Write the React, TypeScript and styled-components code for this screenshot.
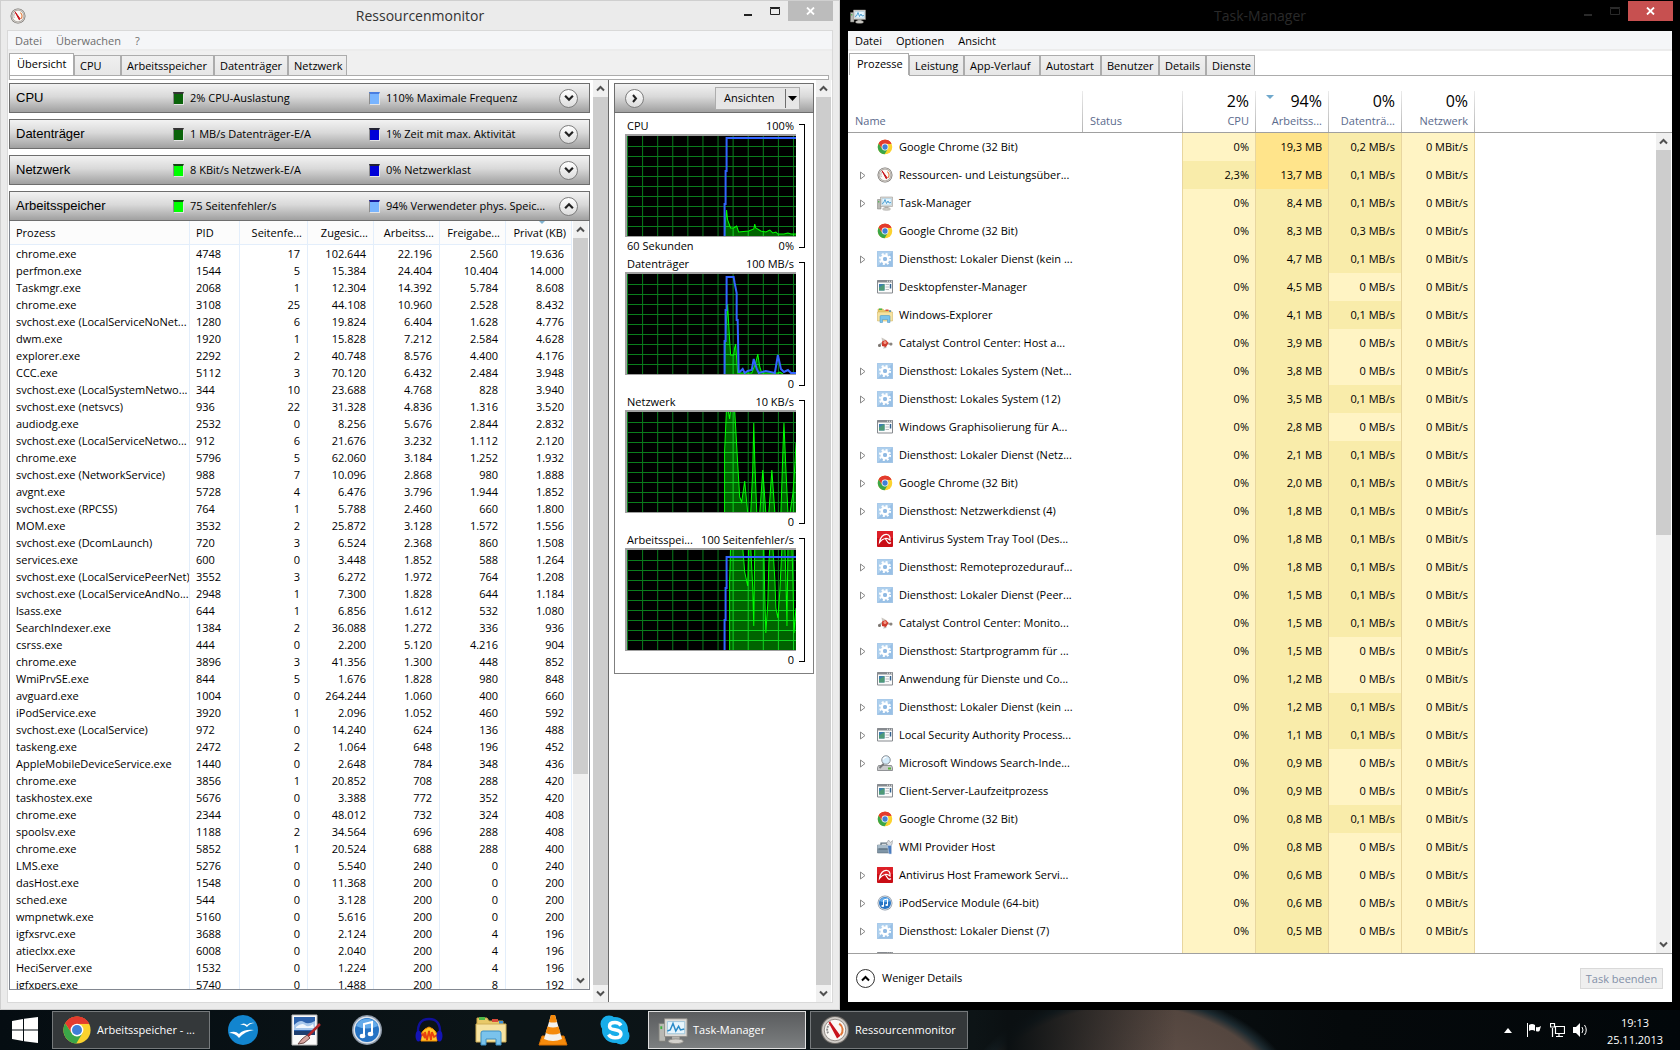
import React from "react";
import styled, { createGlobalStyle } from "styled-components";

const GlobalStyle = createGlobalStyle`
  *, *::before, *::after { box-sizing: border-box; }
  body {
    margin: 0;
    background: #000;
    color: #000;
    font-family: "Open Sans", "Noto Sans", sans-serif;
    font-size: 11px;
    line-height: 16px;
  }
  button {
    margin: 0;
    padding: 0;
    border: 0;
    background: none;
    color: inherit;
    font: inherit;
  }
  svg { display: block; }
`;

/* ---------- icons ---------- */

type IconName =
  | "chrome" | "gauge" | "monitor" | "gear" | "window" | "explorer" | "catalyst"
  | "avira" | "search" | "wmi" | "itunes" | "openoffice" | "paint" | "audacity" | "vlc" | "skype";

const drawings: Record<IconName, React.ReactNode> = {
  chrome: (
    <>
      <circle cx="16" cy="16" r="14.5" fill="#fbd22e" />
      <path d="M16 16 3.4 8.8A14.5 14.5 0 0 1 28.9 9.4L16 9.4Z" fill="#e33b2e" />
      <path d="M3.4 8.8A14.5 14.5 0 0 0 15.2 30.5L21.8 19.4 16 22.6 10.3 19.3Z" fill="#3aa648" />
      <path d="M3.4 8.8 10.3 19.3 9.4 16 16 9.4H28.9A14.5 14.5 0 0 0 3.4 8.8Z" fill="#e33b2e" />
      <circle cx="16" cy="16" r="6.8" fill="#fff" />
      <circle cx="16" cy="16" r="5.3" fill="#3f7fd6" />
    </>
  ),
  gauge: (
    <>
      <circle cx="16" cy="16" r="15" fill="#6f6c68" />
      <circle cx="16" cy="16" r="13.8" fill="#cfcbc6" />
      <circle cx="16" cy="16" r="11.5" fill="#fbf9f5" stroke="#8d8882" strokeWidth="1" />
      <path d="M8.6 19.5A8 8 0 0 1 10 10" fill="none" stroke="#8a8a8a" strokeWidth="2" strokeDasharray="2 1" />
      <path d="M20.5 9.2A8.2 8.2 0 0 1 22 21.5" fill="none" stroke="#e0783a" strokeWidth="2.2" />
      <path d="M10 7.500 20.500 22 18.500 23.600Z" fill="#c8141c" stroke="#c8141c" strokeWidth="2" />
    </>
  ),
  monitor: (
    <>
      <path d="M1 9h7v19H1z" fill="#b9b9b4" stroke="#7d7d78" />
      <path d="M2.5 12h2v3h-2z" fill="#3cb43c" />
      <path d="M7 4h24v19H7z" fill="#dedcd8" stroke="#8f8d88" />
      <path d="M10 7h18.500v13H10z" fill="#e6f5fd" stroke="#9cc4da" />
      <path d="M10 17l3-1 3-7 3 8 3-5 2 4 4-1" fill="none" stroke="#2b8bc8" strokeWidth="1.600" />
      <path d="M15 23h8v4h-8z" fill="#b5b3ae" />
      <ellipse cx="19" cy="28" rx="8" ry="2.500" fill="#d4d2cd" stroke="#93918c" />
    </>
  ),
  gear: (
    <>
      <path d="M.5.500h31v31H.5z" fill="#98c0e6" stroke="#8bb4dc" />
      <path d="M1 1h30L1 31z" fill="#aed0ee" />
      <circle cx="16" cy="16" r="10.200" fill="none" stroke="#fff" strokeWidth="4" strokeDasharray="4 4.010" />
      <circle cx="16" cy="16" r="6.500" fill="none" stroke="#fff" strokeWidth="5" />
      <circle cx="16" cy="16" r="4" fill="#8fb9e2" />
    </>
  ),
  window: (
    <>
      <path d="M1 3h30v25H1z" fill="#fbfbfb" stroke="#868a8f" strokeWidth="2" />
      <path d="M1 2h30v5H1z" fill="#868a8f" />
      <path d="M20 3.500h2v2h-2zM24 3.500h2v2h-2zM28 3.500h2v2h-2z" fill="#e8e8e8" />
      <path d="M4 10h11v13H4z" fill="#3c7fae" />
      <path d="M4 17l11-7v13H4z" fill="#4f9a76" />
      <path d="M17 11h7M17 16h7M17 21h7" stroke="#b9bcc0" strokeWidth="2" />
      <path d="M27 10v9" stroke="#33618f" strokeWidth="3" />
    </>
  ),
  explorer: (
    <>
      <path d="M2 4h10l2 3h14v6H2z" fill="#e8c969" stroke="#c7a447" />
      <path d="M4 3h6v3H4z" fill="#4fb848" />
      <path d="M17 5h6v3h-6z" fill="#d94b3a" />
      <path d="M24 7h4v3h-4z" fill="#3b8fd8" />
      <path d="M1 10h30v18H1z" fill="#f6e3a1" stroke="#cfae56" />
      <path d="M6 31V19q0-2 2-2h16q2 0 2 2v12h-5v-6H11v6z" fill="#7ac3ec" stroke="#3d8fc4" />
    </>
  ),
  catalyst: (
    <>
      <path d="M3 21 13 14 29 19" fill="none" stroke="#b8b2ac" strokeWidth="4" />
      <path d="M9 5l8 4-2 7-5-5z" fill="#cbc6c0" />
      <path d="M17 20l2 6-7 1z" fill="#b8b2ac" />
      <circle cx="5" cy="21" r="3" fill="#77726d" />
      <circle cx="28" cy="18" r="3" fill="#8a847e" />
      <path d="M10 13l8-3 5 6-5 8-8-2z" fill="#cf3a2c" />
      <circle cx="16" cy="15" r="3" fill="#f49a86" />
    </>
  ),
  avira: (
    <>
      <rect width="32" height="32" rx="2" fill="#c90d15" />
      <path d="M0 2q0-2 2-2h28q2 0 2 2v12H0z" fill="#dd1f27" />
      <path d="M5 23C6 12 13 6 20 7q7 1 6 11-5-4-10-3-6 1-11 8z" fill="none" stroke="#fff" strokeWidth="2.400" />
      <path d="M17 16l5 7q3 3 6 0" fill="none" stroke="#fff" strokeWidth="2.400" />
    </>
  ),
  search: (
    <>
      <path d="M3 21h26l2 4v6H1v-6z" fill="#c9cacc" stroke="#76787b" strokeWidth="1.500" />
      <path d="M22 25h6v4h-6z" fill="#55b33a" />
      <path d="M14 17 5 26" stroke="#76787b" strokeWidth="4" />
      <circle cx="18" cy="10" r="8.500" fill="#d4ebfa" stroke="#8b9097" strokeWidth="2" />
      <path d="M12 9q2-5 7-5" stroke="#fff" strokeWidth="2.500" fill="none" />
    </>
  ),
  wmi: (
    <>
      <path d="M8 12v-4h12v4" fill="none" stroke="#5d6f7d" strokeWidth="2.500" />
      <path d="M1 12h27v16H1z" fill="#7f95a6" stroke="#51616e" />
      <path d="M1 12h27v7H1z" fill="#a7bac8" />
      <path d="M3 19h20v2H3z" fill="#51616e" />
      <path d="M19 9l4-7 4 5 4-4-1 8-6 4z" fill="#d9dcdf" stroke="#84898e" />
      <path d="M21 13h8v17h-5z" fill="#4a7cc0" stroke="#d0dcec" />
    </>
  ),
  itunes: (
    <>
      <circle cx="16" cy="16" r="15" fill="#8d99a8" />
      <circle cx="16" cy="16" r="13.500" fill="#dfe5ec" />
      <circle cx="16" cy="16" r="12" fill="#2573c4" />
      <path d="M5 12a12 12 0 0 1 22 0q-11 5-22 0z" fill="#62aaea" />
      <path d="M13 22V10l8-2v12" fill="none" stroke="#fff" strokeWidth="2" />
      <ellipse cx="11.500" cy="22" rx="2.800" ry="2.200" fill="#fff" />
      <ellipse cx="19.500" cy="20" rx="2.800" ry="2.200" fill="#fff" />
    </>
  ),
  openoffice: (
    <>
      <circle cx="16" cy="16" r="15" fill="#1285cf" />
      <path d="M13 11q4-3 7 0 3-3 8-2-5 0-8 4-3-3-7-2z" fill="#fff" />
      <path d="M2 19q6-3 10 1 5-5 15-4-9 1-15 8-4-5-10-5z" fill="#fff" />
    </>
  ),
  paint: (
    <>
      <path d="M3 1h25v30H3z" fill="#fafafa" stroke="#b9b9b9" />
      <path d="M5 3h21v15H5z" fill="#2e63ad" />
      <path d="M5 11q6-6 10-3t11-1v9H5z" fill="#a9c8ec" />
      <path d="M7 13q6-5 9-2t8-1l1 4H7z" fill="#f2f7fc" />
      <path d="M5 17h21v4H5z" fill="#1f3f70" />
      <path d="M31 10 17 24" stroke="#b3262a" strokeWidth="2.500" />
      <path d="M18 21l3 3-6 5-6 1 4-5z" fill="#d7a5a0" stroke="#6d4845" />
    </>
  ),
  audacity: (
    <>
      <path d="M5 20Q4 5 16 5t11 15" fill="none" stroke="#10109a" strokeWidth="2.400" />
      <path d="M8 20l2-3 2-2 2-1 2-1 2 1 2 1 2 2 2 3v7H8z" fill="#ffc629" stroke="#f08a00" />
      <path d="M8 22l2-2 2 4-0-6 2 8 2-9 2 9 1-8 2 5 3-2" fill="none" stroke="#e8420e" strokeWidth="1.800" />
      <ellipse cx="5.500" cy="22" rx="3" ry="5.500" fill="#1414b4" />
      <ellipse cx="26.500" cy="22" rx="3" ry="5.500" fill="#1414b4" />
    </>
  ),
  vlc: (
    <>
      <path d="M5 22h22l3 9H2z" fill="#f58a0b" stroke="#d86f00" />
      <path d="M14 1h4l7 24q-9 4-18 0z" fill="#f4f1ec" />
      <path d="M14 1h4l2 7q-4 1-8 0z" fill="#f58a0b" />
      <path d="M10.500 12.500q5.500 2 11 0l2 6.500q-7.500 3-15 0z" fill="#f58a0b" />
    </>
  ),
  skype: (
    <>
      <circle cx="10" cy="10" r="8.500" fill="#18ade9" />
      <circle cx="22" cy="22" r="8.500" fill="#18ade9" />
      <circle cx="16" cy="16" r="13" fill="#18ade9" />
      <path
        d="M22 11.500Q20 8.500 16 8.500q-5.500 0-5.500 3.700 0 2.800 5.500 3.600 6 .8 6 4.200 0 3.800-6 3.800-4.500 0-6.500-3.300"
        fill="none"
        stroke="#fff"
        strokeWidth="3.400"
      />
    </>
  ),
};

const Icon = ({ name, size = 16 }: { name: IconName; size?: number }) => (
  <svg width={size} height={size} viewBox="0 0 32 32" aria-hidden="true">
    {drawings[name]}
  </svg>
);

const Chevron = ({ up = false, size = 9 }: { up?: boolean; size?: number }) => (
  <svg width={size} height={size} viewBox="0 0 9 9" aria-hidden="true">
    <path d={up ? "M1 6.500 4.500 3 8 6.500" : "M1 2.500 4.500 6 8 2.500"} fill="none" stroke="currentColor" strokeWidth="2" />
  </svg>
);

/* ---------- desktop and window chrome ---------- */

const Desktop = styled.div`
  height: 100vh;
  display: grid;
  grid-template-rows: minmax(0, 1fr) 40px;
`;

const Windows = styled.main`
  display: grid;
  grid-template-columns: 1fr 1fr;
  min-height: 0;
`;

const WindowFrame = styled.section<{ $dark?: boolean }>`
  display: flex;
  flex-direction: column;
  min-width: 0;
  min-height: 0;
  padding: 0 7px 7px;
  background: ${(p) => (p.$dark ? "#000" : "#ebebeb")};
  border: 1px solid ${(p) => (p.$dark ? "#000" : "#cfcfcf")};
`;

const TitleBar = styled.header`
  flex: none;
  display: grid;
  grid-template-columns: 120px 1fr 120px;
  align-items: center;
  height: 30px;
`;

const TitleIcon = styled.span`
  padding-left: 2px;
`;

const Title = styled.h1<{ $dark?: boolean }>`
  margin: 0;
  text-align: center;
  font-size: 14px;
  font-weight: 400;
  line-height: 28px;
  color: ${(p) => (p.$dark ? "#2a2a2a" : "#333")};
`;

const WindowButtons = styled.div<{ $dark?: boolean }>`
  align-self: start;
  justify-self: end;
  display: flex;
  height: 20px;
  margin-right: -1px;
  color: ${(p) => (p.$dark ? "#2a2a2a" : "#222")};
`;

const WindowButton = styled.button<{ $close?: string }>`
  display: grid;
  place-items: center;
  width: ${(p) => (p.$close ? "45px" : "27px")};
  height: 20px;
  background: ${(p) => p.$close ?? "transparent"};
`;

const Client = styled.div<{ $dark?: boolean }>`
  flex: 1;
  display: flex;
  flex-direction: column;
  min-height: 0;
  background: ${(p) => (p.$dark ? "#fff" : "#f0f0f0")};
  outline: ${(p) => (p.$dark ? "0" : "1px solid #d9d9d9")};
`;

const MenuBar = styled.nav<{ $muted?: boolean }>`
  flex: none;
  display: flex;
  height: 20px;
  background: #f5f6f8;
  border-bottom: 2px solid #ececec;
  color: ${(p) => (p.$muted ? "#6d6d6d" : "#000")};
`;

const MenuItem = styled.button`
  padding: 1px 7px 0;
  line-height: 18px;
`;

const TabStrip = styled.div`
  flex: none;
  display: flex;
  align-items: flex-end;
  height: 24px;
  padding-left: 1px;
`;

const Tab = styled.button<{ $w: number; $active?: boolean }>`
  width: ${(p) => p.$w}px;
  height: ${(p) => (p.$active ? "22px" : "20px")};
  padding: 0 ${(p) => (p.$active ? "7px 2px" : "5px 0")};
  text-align: left;
  white-space: nowrap;
  background: ${(p) => (p.$active ? "#fff" : "linear-gradient(#f0f0f0, #e6e6e6)")};
  border: 1px solid #acacac;
  border-bottom: 0;
`;

const WindowControls = ({ closeColor }: { closeColor: string }) => (
  <>
    <WindowButton aria-label="Minimieren">
      <svg width="10" height="12" aria-hidden="true"><path d="M1 9h8v2H1z" fill="currentColor" /></svg>
    </WindowButton>
    <WindowButton aria-label="Maximieren">
      <svg width="10" height="8" aria-hidden="true">
        <path d="M.5 1.500h9v6H.5zM0 .500h10" fill="none" stroke="currentColor" />
      </svg>
    </WindowButton>
    <WindowButton aria-label="Schließen" $close={closeColor}>
      <svg width="9" height="8" aria-hidden="true"><path d="M1 .500l7 7M8 .500l-7 7" stroke="#fff" strokeWidth="1.800" /></svg>
    </WindowButton>
  </>
);

/* ---------- scroll bar ---------- */

const Bar = styled.div`
  flex: none;
  display: flex;
  flex-direction: column;
  width: 15px;
  color: #505050;
  background: #f0f0f0;
`;

const BarButton = styled.button`
  flex: none;
  display: grid;
  place-items: center;
  height: 17px;
`;

const BarTrack = styled.div`
  flex: 1;
  min-height: 0;
`;

const BarThumb = styled.div`
  background: #cdcdcd;
`;

const ScrollBar = ({ share = 100 }: { share?: number }) => (
  <Bar>
    <BarButton aria-label="Nach oben"><Chevron up /></BarButton>
    <BarTrack><BarThumb style={{ height: `${share}%` }} /></BarTrack>
    <BarButton aria-label="Nach unten"><Chevron /></BarButton>
  </Bar>
);

/* ---------- resource monitor ---------- */

const TabPageEdge = styled.div`
  flex: none;
  height: 5px;
  margin: 0 3px 0 1px;
  background: #fff;
  border: 1px solid #acacac;
`;

const MonitorBody = styled.div`
  flex: 1;
  display: flex;
  min-height: 0;
  padding-right: 1px;
  background: #fff;
`;

const Overview = styled.div`
  flex: 1;
  display: flex;
  min-width: 0;
  border-right: 1px solid #696969;
`;

const Sections = styled.div`
  flex: 1;
  display: flex;
  flex-direction: column;
  gap: 6px;
  min-width: 0;
  padding: 3px 3px 12px 1px;
`;

const headFill = "linear-gradient(#f2f2f2, #d9d9d9 45%, #a0a0a0)";

const SectionHead = styled.div`
  flex: none;
  display: grid;
  grid-template-columns: 157px 196px minmax(0, 1fr) 20px;
  align-items: center;
  height: 30px;
  padding: 0 10px 0 6px;
  background: ${headFill};
  border: 1px solid #6e6e6e;
`;

const SectionName = styled.h2`
  margin: 0;
  font-family: "Liberation Sans", Arial, sans-serif;
  font-size: 13px;
  font-weight: 400;
  line-height: 28px;
`;

const Legend = styled.span`
  display: flex;
  align-items: center;
  gap: 6px;
  white-space: nowrap;
`;

const Swatch = styled.i<{ $color: string; $top: string }>`
  width: 11px;
  height: 13px;
  background: ${(p) => p.$color};
  border: 1px solid #e4e4e4;
  border-top: 2px solid ${(p) => p.$top};
  border-left-color: #8c8c8c;
`;

const RoundButton = styled.button`
  display: grid;
  place-items: center;
  width: 19px;
  height: 19px;
  border: 1px solid #7d7d7d;
  border-radius: 50%;
  color: #222;
  background: linear-gradient(#fff, #dcdcdc);
`;

interface SectionInfo {
  name: string;
  open?: boolean;
  a: [string, string, string];
  b: [string, string, string];
}

const sections: SectionInfo[] = [
  { name: "CPU", a: ["#0b640b", "#333", "2% CPU-Auslastung"], b: ["#78b4ff", "#4a7ee0", "110% Maximale Frequenz"] },
  { name: "Datenträger", a: ["#0b640b", "#333", "1 MB/s Datenträger-E/A"], b: ["#0000d8", "#223", "1% Zeit mit max. Aktivität"] },
  { name: "Netzwerk", a: ["#00ff00", "#144814", "8 KBit/s Netzwerk-E/A"], b: ["#0000d8", "#223", "0% Netzwerklast"] },
  { name: "Arbeitsspeicher", open: true, a: ["#00ff00", "#144814", "75 Seitenfehler/s"], b: ["#78b4ff", "#1a1a9c", "94% Verwendeter phys. Speic..."] },
];

const OpenSection = styled.div`
  flex: 1;
  display: flex;
  flex-direction: column;
  min-height: 0;
`;

const TableArea = styled.div`
  flex: 1;
  display: flex;
  gap: 1px;
  min-height: 0;
  padding-right: 1px;
  border: 1px solid #828790;
  border-top: 0;
`;

const TableClip = styled.div`
  flex: 1;
  min-width: 0;
  overflow: hidden;
`;

const MemoryTable = styled.table`
  width: 100%;
  table-layout: fixed;
  border-collapse: separate;
  border-spacing: 0;

  th, td {
    padding: 0 7px 0 6px;
    border-right: 1px solid #e3eefb;
    font-weight: 400;
    text-align: right;
    white-space: nowrap;
    overflow: hidden;
  }
  th { height: 24px; padding-right: 5px; border-bottom: 1px solid #e3eefb; background: #fcfcfc; }
  td { height: 17px; }
  td:first-child { padding-right: 0; }
  th:nth-child(-n + 2), td:nth-child(-n + 2) { text-align: left; }
`;

const SortMark = styled.span`
  position: absolute;
  top: 0;
  left: 50%;
  border: 3px solid transparent;
  border-top-color: #7fb2cf;
  border-bottom: 0;
`;

const SortedHead = styled.span`
  position: relative;
  display: block;
  line-height: 23px;
`;

const memoryText = `chrome.exe|4748|17|102.644|22.196|2.560|19.636
perfmon.exe|1544|5|15.384|24.404|10.404|14.000
Taskmgr.exe|2068|1|12.304|14.392|5.784|8.608
chrome.exe|3108|25|44.108|10.960|2.528|8.432
svchost.exe (LocalServiceNoNet...|1280|6|19.824|6.404|1.628|4.776
dwm.exe|1920|1|15.828|7.212|2.584|4.628
explorer.exe|2292|2|40.748|8.576|4.400|4.176
CCC.exe|5112|3|70.120|6.432|2.484|3.948
svchost.exe (LocalSystemNetwo...|344|10|23.688|4.768|828|3.940
svchost.exe (netsvcs)|936|22|31.328|4.836|1.316|3.520
audiodg.exe|2532|0|8.256|5.676|2.844|2.832
svchost.exe (LocalServiceNetwo...|912|6|21.676|3.232|1.112|2.120
chrome.exe|5796|5|62.060|3.184|1.252|1.932
svchost.exe (NetworkService)|988|7|10.096|2.868|980|1.888
avgnt.exe|5728|4|6.476|3.796|1.944|1.852
svchost.exe (RPCSS)|764|1|5.788|2.460|660|1.800
MOM.exe|3532|2|25.872|3.128|1.572|1.556
svchost.exe (DcomLaunch)|720|3|6.524|2.368|860|1.508
services.exe|600|0|3.448|1.852|588|1.264
svchost.exe (LocalServicePeerNet)|3552|3|6.272|1.972|764|1.208
svchost.exe (LocalServiceAndNo...|2948|1|7.300|1.828|644|1.184
lsass.exe|644|1|6.856|1.612|532|1.080
SearchIndexer.exe|1384|2|36.088|1.272|336|936
csrss.exe|444|0|2.200|5.120|4.216|904
chrome.exe|3896|3|41.356|1.300|448|852
WmiPrvSE.exe|844|5|1.676|1.828|980|848
avguard.exe|1004|0|264.244|1.060|400|660
iPodService.exe|3920|1|2.096|1.052|460|592
svchost.exe (LocalService)|972|0|14.240|624|136|488
taskeng.exe|2472|2|1.064|648|196|452
AppleMobileDeviceService.exe|1440|0|2.648|784|348|436
chrome.exe|3856|1|20.852|708|288|420
taskhostex.exe|5676|0|3.388|772|352|420
chrome.exe|2344|0|48.012|732|324|408
spoolsv.exe|1188|2|34.564|696|288|408
chrome.exe|5852|1|20.524|688|288|400
LMS.exe|5276|0|5.540|240|0|240
dasHost.exe|1548|0|11.368|200|0|200
sched.exe|544|0|3.128|200|0|200
wmpnetwk.exe|5160|0|5.616|200|0|200
igfxsrvc.exe|3688|0|2.124|200|4|196
atieclxx.exe|6008|0|2.040|200|4|196
HeciServer.exe|1532|0|1.224|200|4|196
igfxpers.exe|5740|0|1.488|200|8|192`;
const memoryRows = memoryText.split("\n").map((line) => line.split("|"));

const SectionHeader = ({ info }: { info: SectionInfo }) => (
  <SectionHead>
    <SectionName>{info.name}</SectionName>
    <Legend><Swatch $color={info.a[0]} $top={info.a[1]} />{info.a[2]}</Legend>
    <Legend><Swatch $color={info.b[0]} $top={info.b[1]} />{info.b[2]}</Legend>
    <RoundButton aria-label={info.name + " umschalten"}><Chevron up={info.open} size={10} /></RoundButton>
  </SectionHead>
);

const MemoryList = () => (
  <TableArea>
    <TableClip>
      <MemoryTable>
        <colgroup>
          <col /><col width="50" /><col width="68" /><col width="66" /><col width="66" /><col width="66" /><col width="66" />
        </colgroup>
        <thead>
          <tr>
            <th>Prozess</th><th>PID</th><th>Seitenfe...</th><th>Zugesic...</th><th>Arbeitss...</th><th>Freigabe...</th>
            <th><SortedHead><SortMark />Privat (KB)</SortedHead></th>
          </tr>
        </thead>
        <tbody>
          {memoryRows.map((row) => (
            <tr key={row[1]}>{row.map((cell, i) => <td key={i}>{cell}</td>)}</tr>
          ))}
        </tbody>
      </MemoryTable>
    </TableClip>
    <ScrollBar share={73} />
  </TableArea>
);

/* graphs */

const GraphPane = styled.aside`
  flex: none;
  display: flex;
  width: 222px;
`;

const GraphColumn = styled.div`
  flex: 1;
  padding: 3px 2px 0 5px;
`;

const GraphPanel = styled.div`
  border: 1px solid #7f7f7f;
  border-top: 0;
  padding-bottom: 4px;
`;

const GraphHead = styled.div`
  display: flex;
  align-items: center;
  justify-content: space-between;
  height: 30px;
  margin: 0 -1px 4px;
  padding: 0 13px 0 10px;
  background: ${headFill};
  border: 1px solid #6e6e6e;
`;

const ViewsButton = styled.button`
  display: flex;
  align-items: center;
  width: 85px;
  height: 23px;
  padding-left: 8px;
  background: #e6e6e6;
  border: 1px solid #adadad;
`;

const ViewsArrow = styled.span`
  display: grid;
  place-items: center;
  height: 19px;
  margin-left: auto;
  padding: 0 2px;
  border-left: 1px solid #6e6e6e;
`;

const GraphBlock = styled.figure`
  display: grid;
  grid-template-columns: 1fr 6px;
  column-gap: 3px;
  height: 138px;
  margin: 0;
  padding: 0 8px 0 10px;
`;

const GraphLine = styled.figcaption<{ $end?: boolean }>`
  display: flex;
  justify-content: ${(p) => (p.$end ? "flex-end" : "space-between")};
  padding: 0 2px;
  line-height: 17px;
`;

const GraphFrame = styled.div`
  height: 103px;
  border: 1px solid #a0a0a0;
  border-width: 2px 0 1px 2px;
  background: #000;
`;

const Bracket = styled.div`
  height: 124px;
  margin-top: 7px;
  border: 1px solid #000;
  border-left: 0;
`;

interface GraphInfo {
  name: string;
  max: string;
  footLeft?: string;
  min: string;
  green: string;
  blue?: string;
}

const graphs: GraphInfo[] = [
  {
    name: "CPU", max: "100%", footLeft: "60 Sekunden", min: "0%",
    green: "97,100 98,84 99,74 100,84 103,92 106,92 109,90 111,96 121,95 126,93 127,88 128,92 133,95 138,96 142,94 145,97 148,96 150,98 156,98 160,97 163,98 168,98",
    blue: "97,100 97,68 98,68 98,35 99,35 99,2 168,2",
  },
  {
    name: "Datenträger", max: "100 MB/s", min: "0",
    green: "97,100 98,60 100,30 102,66 103,81 106,81 107,74 108,70 110,99 124,99 128,89 130,80 132,93 134,99 150,99 152,98 155,100",
    blue: "97,100 97,67 98,67 98,36 99,36 99,3 106,3 107,9 109,19 109,46 110,46 111,98 112,98 115,95 117,99 120,97 124,96 126,85 129,95 131,99 138,97 147,99 150,81 153,95 156,98 160,96 163,99 168,99",
  },
  {
    name: "Netzwerk", max: "10 KB/s", min: "0",
    green: "97,100 97,39 99,-5 100,-5 102,7 103,-2 107,-2 108,15 110,51 112,85 114,90 117,69 120,101 123,101 125,58 126,11 127,48 129,101 132,101 135,58 138,101 141,101 144,58 147,101 153,101 155,38 156,11 158,58 160,101 162,101 165,81 167,51 168,31",
  },
  {
    name: "Arbeitsspei...", max: "100 Seitenfehler/s", min: "0",
    green: "102,100 102,33 103,-5 115,-3 117,22 120,36 121,-3 123,-3 125,38 126,76 127,-3 136,-3 137,47 138,83 140,53 141,13 142,-3 145,-3 147,30 148,58 150,68 152,40 154,-3 157,-3 158,30 159,76 160,-3 164,-3 165,33 166,83 168,58",
    blue: "97,100 97,70 98,70 98,38 99,38 99,7 168,7",
  },
];

const gridPath =
  Array.from({ length: 12 }, (_, i) => `M${i * 15 + 0.5} 0V100`).join("") +
  Array.from({ length: 9 }, (_, i) => `M0 ${i * 10 + 10.5}H168`).join("");

const Graph = ({ info, id }: { info: GraphInfo; id: string }) => {
  const area = `${info.green} 168,101 97,101`;
  return (
    <GraphBlock>
      <div>
        <GraphLine><span>{info.name}</span><span>{info.max}</span></GraphLine>
        <GraphFrame>
          <svg width="100%" height="100" viewBox="0 0 168 100" preserveAspectRatio="none" aria-hidden="true">
            <clipPath id={id}><polygon points={area} /></clipPath>
            <path d={gridPath} stroke="#0a7d1c" fill="none" />
            <g clipPath={`url(#${id})`}>
              <path d="M0 0h168v100H0z" fill="#006400" />
              <path d={gridPath} stroke="#0fd420" fill="none" />
            </g>
            <polyline points={info.green} fill="none" stroke="#00ff00" />
            {info.blue && <polyline points={info.blue} fill="none" stroke="#3264ff" strokeWidth="2" />}
          </svg>
        </GraphFrame>
        <GraphLine as="div" $end={!info.footLeft}>
          {info.footLeft && <span>{info.footLeft}</span>}
          <span>{info.min}</span>
        </GraphLine>
      </div>
      <Bracket />
    </GraphBlock>
  );
};

const ResourceMonitor = () => (
  <WindowFrame>
    <TitleBar>
      <TitleIcon><Icon name="gauge" /></TitleIcon>
      <Title>Ressourcenmonitor</Title>
      <WindowButtons><WindowControls closeColor="#bcbcbc" /></WindowButtons>
    </TitleBar>
    <Client>
      <MenuBar $muted>
        <MenuItem>Datei</MenuItem><MenuItem>Überwachen</MenuItem><MenuItem>?</MenuItem>
      </MenuBar>
      <TabStrip>
        <Tab $w={65} $active>Übersicht</Tab>
        <Tab $w={47}>CPU</Tab>
        <Tab $w={93}>Arbeitsspeicher</Tab>
        <Tab $w={74}>Datenträger</Tab>
        <Tab $w={59}>Netzwerk</Tab>
      </TabStrip>
      <TabPageEdge />
      <MonitorBody>
        <Overview>
          <Sections>
            {sections.map((s) =>
              s.open ? (
                <OpenSection key={s.name}><SectionHeader info={s} /><MemoryList /></OpenSection>
              ) : (
                <SectionHeader key={s.name} info={s} />
              ),
            )}
          </Sections>
          <ScrollBar />
        </Overview>
        <GraphPane>
          <GraphColumn>
            <GraphPanel>
              <GraphHead>
                <RoundButton aria-label="Diagramme ausblenden">
                  <svg width="9" height="9" aria-hidden="true"><path d="M3 1l3 3.500L3 8" fill="none" stroke="#222" strokeWidth="2" /></svg>
                </RoundButton>
                <ViewsButton>
                  Ansichten
                  <ViewsArrow><svg width="9" height="5" aria-hidden="true"><path d="M0 0h9L4.500 5z" /></svg></ViewsArrow>
                </ViewsButton>
              </GraphHead>
              {graphs.map((g, i) => <Graph key={g.name} info={g} id={`area${i}`} />)}
            </GraphPanel>
          </GraphColumn>
          <ScrollBar />
        </GraphPane>
      </MonitorBody>
    </Client>
  </WindowFrame>
);

/* ---------- task manager ---------- */

const TabLine = styled.div`
  flex: none;
  height: 1px;
  margin-left: 61px;
  background: #acacac;
`;

const ProcessHeadArea = styled.div`
  flex: none;
  padding-top: 15px;
  border-bottom: 1px solid #a0a0a0;
`;

const ProcessArea = styled.div`
  flex: 1;
  display: flex;
  min-height: 0;
  padding-right: 1px;
`;

const ProcessClip = styled.div`
  flex: 1;
  min-width: 0;
  overflow: hidden;
`;

const ProcessTable = styled.table`
  width: 627px;
  table-layout: fixed;
  border-collapse: separate;
  border-spacing: 0;
`;

const HeadCell = styled.th<{ $left?: boolean }>`
  height: 41px;
  padding: 0 7px 2px;
  vertical-align: bottom;
  text-align: ${(p) => (p.$left ? "left" : "right")};
  font-weight: 400;
  line-height: 18px;
  color: #5a6a8c;
  white-space: nowrap;
  background: linear-gradient(#ebebeb, #b4b4b4) right / 1px 100% no-repeat;
`;

const Total = styled.span<{ $sorted?: boolean }>`
  display: flex;
  align-items: center;
  justify-content: ${(p) => (p.$sorted ? "space-between" : "flex-end")};
  margin-bottom: 1px;
  font-size: 16px;
  line-height: 20px;
  color: #000;
`;

const SortArrow = styled.i`
  align-self: flex-start;
  margin: 4px 0 0 3px;
  border: 4px solid transparent;
  border-top-color: #6fa8cc;
  border-bottom: 0;
`;

const heat = ["#fff4c4", "#f9ecaa", "#ffe48b"];

const HeatCell = styled.td<{ $heat: number }>`
  height: 28px;
  padding: 0 6px 0 0;
  text-align: right;
  white-space: nowrap;
  background: ${(p) => heat[p.$heat]};
  border-right: 1px solid #e8d69f;
`;

const NameCell = styled.td`
  height: 28px;
  padding: 0;
`;

const StatusCell = styled.td`
  border-right: 1px solid #e8d69f;
`;

const ProcessName = styled.span`
  display: grid;
  grid-template-columns: 17px 16px 1fr;
  column-gap: 6px;
  align-items: center;
  padding-left: 6px;
  white-space: nowrap;
`;

const Expander = styled.button`
  padding-left: 6px;
`;

const Footer = styled.footer`
  flex: none;
  display: flex;
  align-items: center;
  justify-content: space-between;
  height: 49px;
  padding: 0 9px 0 8px;
  border-top: 1px solid #a0a0a0;
`;

const LessDetails = styled.button`
  display: flex;
  align-items: center;
  gap: 7px;
`;

const Ring = styled.span`
  display: grid;
  place-items: center;
  width: 19px;
  height: 19px;
  border: 1px solid #333;
  border-radius: 50%;
`;

const EndTask = styled.button`
  width: 83px;
  height: 21px;
  line-height: 19px;
  color: #838fa8;
  background: #efefef;
  border: 1px solid #d9d9d9;
`;

type Process = [expand: 0 | 1, icon: IconName, name: string, cpu: string, memory: string, disk: string];

const processes: Process[] = [
  [0, "chrome", "Google Chrome (32 Bit)", "0", "19,3", "0,2"],
  [1, "gauge", "Ressourcen- und Leistungsüber...", "2,3", "13,7", "0,1"],
  [1, "monitor", "Task-Manager", "0", "8,4", "0,1"],
  [0, "chrome", "Google Chrome (32 Bit)", "0", "8,3", "0,3"],
  [1, "gear", "Diensthost: Lokaler Dienst (kein ...", "0", "4,7", "0,1"],
  [0, "window", "Desktopfenster-Manager", "0", "4,5", "0"],
  [0, "explorer", "Windows-Explorer", "0", "4,1", "0,1"],
  [0, "catalyst", "Catalyst Control Center: Host a...", "0", "3,9", "0"],
  [1, "gear", "Diensthost: Lokales System (Net...", "0", "3,8", "0"],
  [1, "gear", "Diensthost: Lokales System (12)", "0", "3,5", "0,1"],
  [0, "window", "Windows Graphisolierung für A...", "0", "2,8", "0"],
  [1, "gear", "Diensthost: Lokaler Dienst (Netz...", "0", "2,1", "0,1"],
  [1, "chrome", "Google Chrome (32 Bit)", "0", "2,0", "0,1"],
  [1, "gear", "Diensthost: Netzwerkdienst (4)", "0", "1,8", "0,1"],
  [0, "avira", "Antivirus System Tray Tool (Des...", "0", "1,8", "0,1"],
  [1, "gear", "Diensthost: Remoteprozedurauf...", "0", "1,8", "0,1"],
  [1, "gear", "Diensthost: Lokaler Dienst (Peer...", "0", "1,5", "0,1"],
  [0, "catalyst", "Catalyst Control Center: Monito...", "0", "1,5", "0,1"],
  [1, "gear", "Diensthost: Startprogramm für ...", "0", "1,5", "0"],
  [0, "window", "Anwendung für Dienste und Co...", "0", "1,2", "0"],
  [1, "gear", "Diensthost: Lokaler Dienst (kein ...", "0", "1,2", "0,1"],
  [1, "window", "Local Security Authority Process...", "0", "1,1", "0,1"],
  [1, "search", "Microsoft Windows Search-Inde...", "0", "0,9", "0"],
  [0, "window", "Client-Server-Laufzeitprozess", "0", "0,9", "0"],
  [0, "chrome", "Google Chrome (32 Bit)", "0", "0,8", "0,1"],
  [0, "wmi", "WMI Provider Host", "0", "0,8", "0"],
  [1, "avira", "Antivirus Host Framework Servi...", "0", "0,6", "0"],
  [1, "itunes", "iPodService Module (64-bit)", "0", "0,6", "0"],
  [1, "gear", "Diensthost: Lokaler Dienst (7)", "0", "0,5", "0"],
];

const ProcessCols = () => (
  <colgroup>
    <col width="235" /><col width="100" /><col width="73" /><col width="73" /><col width="73" /><col />
  </colgroup>
);

const TaskManager = () => (
  <WindowFrame $dark>
    <TitleBar>
      <TitleIcon><Icon name="monitor" /></TitleIcon>
      <Title $dark>Task-Manager</Title>
      <WindowButtons $dark><WindowControls closeColor="#c75050" /></WindowButtons>
    </TitleBar>
    <Client $dark>
      <MenuBar>
        <MenuItem>Datei</MenuItem><MenuItem>Optionen</MenuItem><MenuItem>Ansicht</MenuItem>
      </MenuBar>
      <TabStrip>
        <Tab $w={60} $active>Prozesse</Tab>
        <Tab $w={55}>Leistung</Tab>
        <Tab $w={76}>App-Verlauf</Tab>
        <Tab $w={61}>Autostart</Tab>
        <Tab $w={58}>Benutzer</Tab>
        <Tab $w={47}>Details</Tab>
        <Tab $w={49}>Dienste</Tab>
      </TabStrip>
      <TabLine />
      <ProcessHeadArea>
        <ProcessTable>
          <ProcessCols />
          <thead>
            <tr>
              <HeadCell $left>Name</HeadCell>
              <HeadCell $left>Status</HeadCell>
              <HeadCell><Total>2%</Total>CPU</HeadCell>
              <HeadCell><Total $sorted><SortArrow />94%</Total>Arbeitss...</HeadCell>
              <HeadCell><Total>0%</Total>Datenträ...</HeadCell>
              <HeadCell><Total>0%</Total>Netzwerk</HeadCell>
            </tr>
          </thead>
        </ProcessTable>
      </ProcessHeadArea>
      <ProcessArea>
        <ProcessClip>
          <ProcessTable>
            <ProcessCols />
            <tbody>
              {processes.map(([expand, icon, name, cpu, memory, disk], i) => (
                <tr key={i}>
                  <NameCell>
                    <ProcessName>
                      {expand ? (
                        <Expander aria-label="Erweitern">
                          <svg width="6" height="9" aria-hidden="true"><path d="M.5 1v7L5 4.500z" fill="#fff" stroke="#8a8a8a" /></svg>
                        </Expander>
                      ) : <span />}
                      <Icon name={icon} />
                      {name}
                    </ProcessName>
                  </NameCell>
                  <StatusCell />
                  <HeatCell $heat={cpu === "0" ? 0 : 1}>{cpu}%</HeatCell>
                  <HeatCell $heat={parseFloat(memory) > 10 ? 2 : 1}>{memory} MB</HeatCell>
                  <HeatCell $heat={disk === "0" ? 0 : 1}>{disk} MB/s</HeatCell>
                  <HeatCell $heat={0}>0 MBit/s</HeatCell>
                </tr>
              ))}
              <tr>
                <NameCell><ProcessName><span /><Icon name="window" /></ProcessName></NameCell>
                <StatusCell />
                <HeatCell $heat={0} /><HeatCell $heat={1} /><HeatCell $heat={0} /><HeatCell $heat={0} />
              </tr>
            </tbody>
          </ProcessTable>
        </ProcessClip>
        <ScrollBar share={49} />
      </ProcessArea>
      <Footer>
        <LessDetails><Ring><Chevron up /></Ring>Weniger Details</LessDetails>
        <EndTask disabled>Task beenden</EndTask>
      </Footer>
    </Client>
  </WindowFrame>
);

/* ---------- task bar ---------- */

const TaskBar = styled.footer`
  display: flex;
  align-items: center;
  padding-right: 17px;
  color: #fff;
  background:
    linear-gradient(90deg, transparent 58%, #0b1012 60%, #0b101200 70%),
    radial-gradient(ellipse 175px 130px at 1130px 110px, #6a5850 0, #54463f 88%, #1c2a30 94%, transparent 100%),
    linear-gradient(90deg, #050d12, #0b1417 30%, #0d1416 60%, #05090b 80%, #02070a);
`;

const StartButton = styled.button`
  display: grid;
  place-items: center;
  width: 50px;
  height: 40px;
`;

const AppButton = styled.button<{ $active?: boolean }>`
  display: flex;
  align-items: center;
  gap: 5px;
  width: 158px;
  height: 38px;
  margin: 0 2px;
  padding-left: 9px;
  white-space: nowrap;
  background: ${(p) => (p.$active ? "linear-gradient(#5a5c5e, #7c7f80)" : "#34383a")};
  border: 1px solid ${(p) => (p.$active ? "#e0e0e0" : "#75797b")};
`;

const PinnedButton = styled.button`
  display: grid;
  place-items: center;
  width: 62px;
  height: 40px;
`;

const Tray = styled.div`
  display: flex;
  align-items: center;
  gap: 8px;
  margin-left: auto;
`;

const TrayMore = styled.button`
  padding-right: 6px;
`;

const Clock = styled.time`
  margin-left: 11px;
  padding-top: 2px;
  text-align: center;
  line-height: 17px;
`;

const pinned: IconName[] = ["openoffice", "paint", "itunes", "audacity", "explorer", "vlc", "skype"];

const DesktopTaskBar = () => (
  <TaskBar>
    <StartButton aria-label="Start">
      <svg width="26" height="26" viewBox="0 0 26 26" aria-hidden="true">
        <path d="M0 4l11-2v10.500H0zM12 1.800 26 0v12.500H12zM0 13.500h11V24L0 22zM12 13.500h14V26l-14-1.800z" fill="#fff" />
      </svg>
    </StartButton>
    <AppButton><Icon name="chrome" size={30} />Arbeitsspeicher - ...</AppButton>
    {pinned.map((name) => (
      <PinnedButton key={name} aria-label={name}><Icon name={name} size={32} /></PinnedButton>
    ))}
    <AppButton $active><Icon name="monitor" size={30} />Task-Manager</AppButton>
    <AppButton><Icon name="gauge" size={30} />Ressourcenmonitor</AppButton>
    <Tray>
      <TrayMore aria-label="Ausgeblendete Symbole">
        <svg width="8" height="5" aria-hidden="true"><path d="M0 5 4 0l4 5z" fill="#fff" /></svg>
      </TrayMore>
      <svg width="16" height="16" aria-hidden="true">
        <path d="M1.500 1v14" stroke="#fff" />
        <path d="M3 3q3-2 6 0v6q-3-2-6 0zM10 5q2 1 5-1l-1.500 5q-2 1-3.500 0z" fill="#fff" />
      </svg>
      <svg width="15" height="16" aria-hidden="true">
        <path d="M5.500 4.500h9v7h-9zM9 12v2M6 14.500h7M2.500 6v9M.5 1.500h4v3.500h-4z" fill="none" stroke="#fff" strokeWidth="1.200" />
      </svg>
      <svg width="15" height="16" aria-hidden="true">
        <path d="M0 5h3l4-4v14l-4-4H0z" fill="#fff" />
        <path d="M9 5q2 3 0 6M11.500 3q3.500 5 0 10" fill="none" stroke="#fff" />
      </svg>
      <Clock>19:13<br />25.11.2013</Clock>
    </Tray>
  </TaskBar>
);

export default function App() {
  return (
    <>
      <GlobalStyle />
      <Desktop>
        <Windows>
          <ResourceMonitor />
          <TaskManager />
        </Windows>
        <DesktopTaskBar />
      </Desktop>
    </>
  );
}
